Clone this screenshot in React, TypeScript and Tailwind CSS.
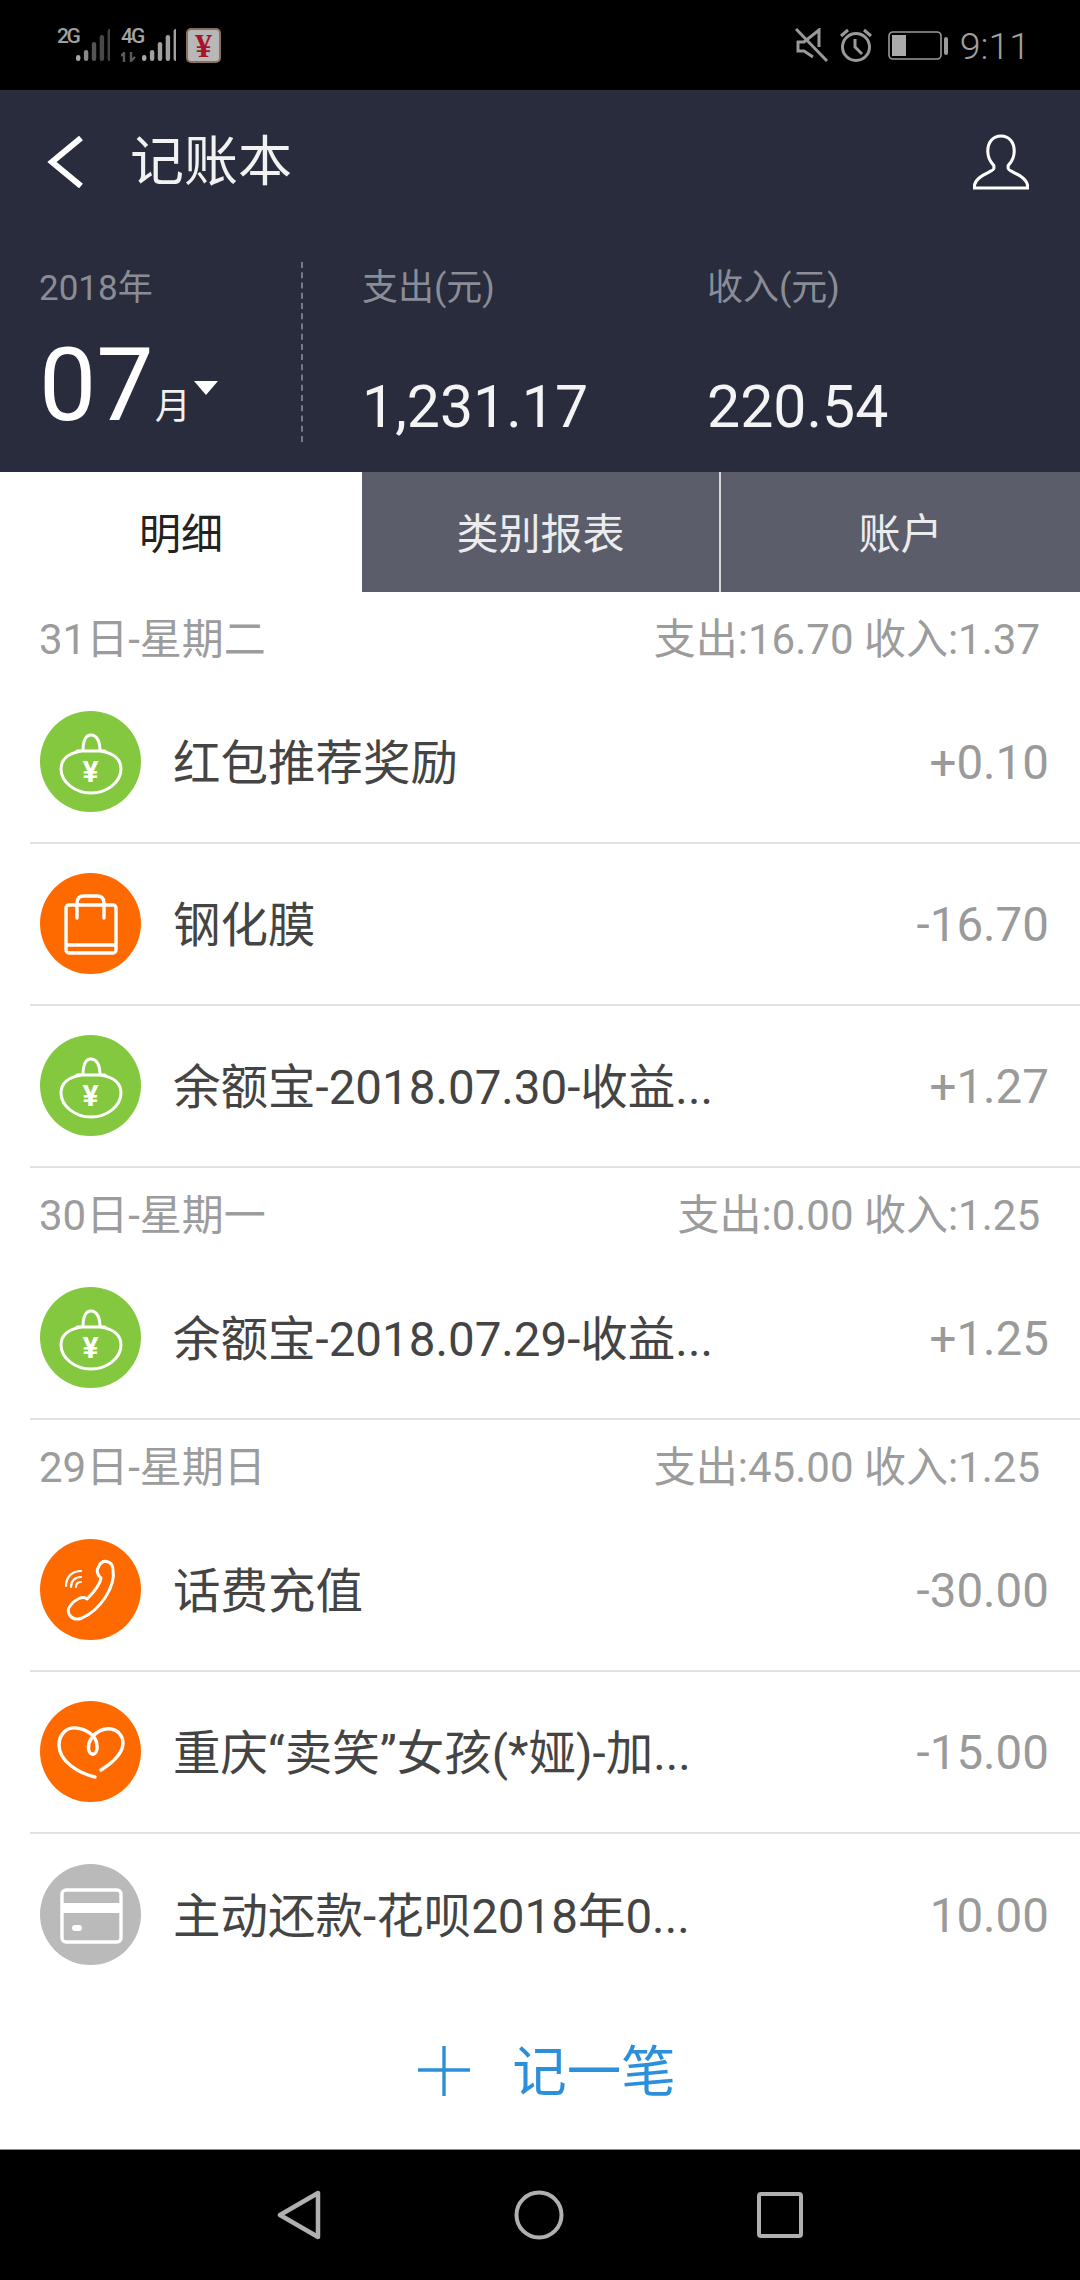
const FONT = 'font-["Roboto","Noto_Sans_CJK_SC",sans-serif]';

function MoneyBag() {
  return (
    <>
      <path d="M43 40C43 29 46 24 51 24C56 24 60 29 60 40" fill="none" stroke="#fff" strokeWidth="3" />
      <path d="M37 40H65" fill="none" stroke="#fff" strokeWidth="3" strokeLinecap="round" />
      <path d="M41 40C29 42 21 48 21 58C21 71 35 82 51 82C67 82 81 71 81 58C81 48 73 42 61 40" fill="none" stroke="#fff" strokeWidth="3" />
      <text x="50.5" y="70.5" textAnchor="middle" fontSize="30" fontWeight="700" fill="#fff" fontFamily="Roboto, sans-serif">¥</text>
    </>
  );
}

function Bag() {
  return (
    <>
      <rect x="26" y="32" width="50" height="48" rx="3" fill="none" stroke="#fff" strokeWidth="3.4" />
      <path d="M37 45V30C37 25 40 23 44 23H57C61 23 64 25 64 30V45" fill="none" stroke="#fff" strokeWidth="3.4" strokeLinecap="round" />
      <path d="M26 72H76" fill="none" stroke="#fff" strokeWidth="3.4" />
    </>
  );
}

function Phone() {
  return (
    <>
      <path d="M59 27C62 20 72 21 73 30C76 48 60 71 42 79C32 83 25 74 30 67C34 61 43 56 47 60C53 54 60 46 61 39C57 36 56 31 59 27Z" fill="none" stroke="#fff" strokeWidth="3" strokeLinejoin="round" />
      <path d="M36 48C36 45 38 43 41 43M31 48C31 42 35 38 41 38M26 47C26 38 32 32 41 32" fill="none" stroke="#fff" strokeWidth="2.2" strokeLinecap="round" />
    </>
  );
}

function Heart() {
  return (
    <path d="M55 76C38 72 19 60 19 44C19 32 28 26 36 27C46 28 56 34 57 44C58 50 55 54 52 53C48 52 47 44 51 38C56 30 64 27 71 28C78 29 83 35 83 42C83 52 72 62 61 69" fill="none" stroke="#fff" strokeWidth="3.4" strokeLinecap="round" />
  );
}

function Card() {
  return (
    <>
      <rect x="22" y="26" width="59" height="52" rx="4" fill="none" stroke="#fff" strokeWidth="3.4" />
      <rect x="22" y="39" width="59" height="10" fill="#fff" />
      <rect x="32" y="61" width="10" height="6" rx="3" fill="#fff" />
    </>
  );
}

const ICONS = {
  bag: { bg: "bg-[#84c83f]", el: <MoneyBag /> },
  shop: { bg: "bg-[#ff6a00]", el: <Bag /> },
  phone: { bg: "bg-[#ff6a00]", el: <Phone /> },
  heart: { bg: "bg-[#ff6a00]", el: <Heart /> },
  card: { bg: "bg-[#bababa]", el: <Card /> },
};

type IconName = keyof typeof ICONS;

function Row({ icon, title, amount, last }: { icon: IconName; title: string; amount: string; last?: boolean }) {
  const item = ICONS[icon];
  return (
    <div className="h-[162px] pl-[30px]">
      <div className={`flex h-full items-center pl-[10px] pr-[31px] ${last ? "" : "border-b-2 border-[#e2e2e2]"}`}>
        <div className={`mt-[-2px] h-[101px] w-[101px] shrink-0 rounded-full ${item.bg}`}>
          <svg viewBox="0 0 101 101" className="h-[101px] w-[101px]">{item.el}</svg>
        </div>
        <div className="ml-[32px] flex-1 whitespace-nowrap pt-[6px] text-[47.5px] leading-none text-[#444444]">{title}</div>
        <div className="pt-[4px] text-[47.5px] leading-none text-[#9a9a9a]">{amount}</div>
      </div>
    </div>
  );
}

function Section({ day, summary }: { day: string; summary: string }) {
  return (
    <div className="flex h-[90px] items-center justify-between pl-[39px] pr-[40px] pt-[6px] text-[42px] leading-none text-[#9c9c9c]">
      <span>{day}</span>
      <span>{summary}</span>
    </div>
  );
}

function Bars({ levels }: { levels: string[] }) {
  const hs = [6, 11, 19, 26, 32];
  return (
    <svg width="35" height="34" viewBox="0 0 35 34">
      {hs.map((h, i) => (
        <rect key={i} x={1 + i * 7.9} y={33 - h} width="4.4" height={h} rx="2.2" fill={levels[i]} />
      ))}
    </svg>
  );
}

export default function App() {
  return (
    <div className={`flex h-[2280px] w-[1080px] flex-col overflow-hidden bg-white ${FONT}`}>
      {/* status bar */}
      <div className="flex h-[90px] shrink-0 items-start justify-between bg-black pl-[57px] pr-[50px] pt-[28px] text-[#9a9a9a]">
        <div className="flex items-start">
          <span className="w-[18px] text-[21px] font-medium leading-[17px] tracking-[-2.5px] text-[#9f9f9f]">2G</span>
          <Bars levels={["#a8a8a8", "#8a8a8a", "#555555", "#484848", "#444444"]} />
          <div className="ml-[11px] flex w-[20px] flex-col">
            <span className="text-[21px] font-medium leading-[17px] tracking-[-2px] text-[#a5a5a5]">4G</span>
            <svg width="20" height="10" viewBox="0 0 20 10" fill="none" className="mt-[7px]">
              <path d="M3 10V1L0 4M10 0V9L14 5" stroke="#5a5a5a" strokeWidth="2.4" />
            </svg>
          </div>
          <Bars levels={["#a8a8a8", "#a0a0a0", "#a0a0a0", "#a0a0a0", "#a0a0a0"]} />
          <div className="ml-[10px] flex h-[35px] w-[35px] items-center justify-center rounded-[5px] border-2 border-[#8a6f5c] bg-[#b8b8b8] font-['Liberation_Serif',serif] text-[34px] font-bold leading-none text-[#a5142a]">¥</div>
        </div>
        <div className="flex items-start">
          <svg width="34" height="34" viewBox="0 0 34 34" fill="none" stroke="#9a9a9a">
            <path d="M2 14H9L24 2V19" strokeWidth="3" />
            <path d="M3 13V23H9L18 29" strokeWidth="3" />
            <path d="M1 1L32 33" strokeWidth="3" />
          </svg>
          <svg width="34" height="34" viewBox="0 0 34 34" fill="none" stroke="#9a9a9a" className="ml-[10px]">
            <circle cx="17" cy="19" r="13.5" strokeWidth="3" />
            <path d="M16 11V19L23 26" strokeWidth="3" />
            <path d="M2 8L9 2M32 8L25 2" strokeWidth="3" />
          </svg>
          <svg width="62" height="30" viewBox="0 0 62 30" fill="none" className="ml-[15px] mt-[3px]">
            <rect x="1" y="1" width="52" height="27" rx="4" stroke="#9a9a9a" strokeWidth="1.6" />
            <rect x="4" y="4" width="14" height="21" fill="#aaaaaa" />
            <rect x="56" y="6" width="4" height="18" rx="2" fill="#9a9a9a" />
          </svg>
          <span className="ml-[10px] mt-[-1px] text-[37.5px] font-light leading-[38px] text-[#a0a0a0]">9:11</span>
        </div>
      </div>

      {/* header */}
      <div className="h-[382px] shrink-0 bg-[#282c3d] text-white">
        <div className="flex h-[140px] items-center justify-between pl-[46px] pr-[50px] pt-[3px]">
          <div className="flex items-center">
            <svg width="38" height="52" viewBox="0 0 38 52" fill="none">
              <path d="M35 2L6 26L35 50" stroke="#fff" strokeWidth="6" />
            </svg>
            <span className="ml-[46px] pt-[2px] text-[54px] leading-none text-[#f2f2f2]">记账本</span>
          </div>
          <svg width="58" height="56" viewBox="0 0 56 55" fill="none">
            <path d="M28 2C20 2 15 8 15 17C15 24 18 28 21 31V34C21 37 4 40 2 50V53H54V50C52 40 35 37 35 34V31C38 28 41 24 41 17C41 8 36 2 28 2Z" stroke="#fff" strokeWidth="3" />
          </svg>
        </div>
        <div className="flex h-[242px] items-start">
          <div className="w-[301px] shrink-0 pl-[39px] pt-[37px]">
            <div className="text-[35px] leading-[44px] text-[#8a8d96]">2018年</div>
            <div className="mt-[30px] flex items-end">
              <span className="text-[102px] leading-[88px] text-white">07</span>
              <span className="ml-[1px] pb-[4px] text-[36px] leading-none text-[#f0f0f0]">月</span>
              <svg width="26" height="16" viewBox="0 0 26 16" className="mb-[33px] ml-[2px]"><path d="M1 1H25L13 15Z" fill="#fff" /></svg>
            </div>
          </div>
          <div className="mt-[32px] h-[180px] w-0 border-l-2 border-dashed border-[#77798a]" />
          <div className="ml-[59px] w-[345px] pt-[36px]">
            <div className="text-[36px] leading-[44px] text-[#8a8d96]">支出(元)</div>
            <div className="mt-[62px] text-[59px] leading-[70px] text-[#f4f4f4]">1,231.17</div>
          </div>
          <div className="pt-[36px]">
            <div className="text-[36px] leading-[44px] text-[#8a8d96]">收入(元)</div>
            <div className="mt-[62px] text-[59px] leading-[70px] text-[#f4f4f4]">220.54</div>
          </div>
        </div>
      </div>

      {/* tabs */}
      <div className="flex h-[120px] shrink-0 text-[42px] leading-none">
        <div className="flex w-[362px] items-center justify-center bg-white pt-[6px] text-[#222222]">明细</div>
        <div className="flex w-[357px] items-center justify-center bg-[#5b5e6a] pt-[6px] text-[#ececee]">类别报表</div>
        <div className="w-[2px] bg-[#d8d8dc]" />
        <div className="flex flex-1 items-center justify-center bg-[#5b5e6a] pt-[6px] text-[#ececee]">账户</div>
      </div>

      {/* list */}
      <div className="flex-1 overflow-hidden">
        <Section day="31日-星期二" summary="支出:16.70 收入:1.37" />
        <Row icon="bag" title="红包推荐奖励" amount="+0.10" />
        <Row icon="shop" title="钢化膜" amount="-16.70" />
        <Row icon="bag" title="余额宝-2018.07.30-收益..." amount="+1.27" />
        <Section day="30日-星期一" summary="支出:0.00 收入:1.25" />
        <Row icon="bag" title="余额宝-2018.07.29-收益..." amount="+1.25" />
        <Section day="29日-星期日" summary="支出:45.00 收入:1.25" />
        <Row icon="phone" title="话费充值" amount="-30.00" />
        <Row icon="heart" title="重庆“卖笑”女孩(*娅)-加..." amount="-15.00" />
        <Row icon="card" title="主动还款-花呗2018年0..." amount="10.00" last />
      </div>

      {/* add button */}
      <div className="flex h-[154px] shrink-0 items-center justify-center gap-[41px] border-b border-[#8c8c8c] bg-white pl-[13px] text-[#2b90d9]">
        <svg width="54" height="50" viewBox="0 0 54 50" fill="none" className="mt-[-4px]">
          <path d="M1 24H53M27 0V50" stroke="#2b90d9" strokeWidth="3.4" />
        </svg>
        <span className="text-[54.5px] leading-none">记一笔</span>
      </div>

      {/* nav bar */}
      <div className="relative flex h-[130px] shrink-0 items-start justify-center bg-black pt-[40px]">
        <div className="flex w-[526px] items-center justify-between">
          <svg width="44" height="50" viewBox="0 0 44 50" fill="none">
            <path d="M41 3V47L3 25Z" stroke="#b0b0b0" strokeWidth="4.5" strokeLinejoin="round" />
          </svg>
          <svg width="50" height="50" viewBox="0 0 50 50" fill="none">
            <circle cx="25" cy="25" r="22.5" stroke="#b0b0b0" strokeWidth="4" />
          </svg>
          <svg width="46" height="46" viewBox="0 0 46 46" fill="none">
            <rect x="2" y="2" width="42" height="42" rx="2" stroke="#b0b0b0" strokeWidth="4" />
          </svg>
        </div>
      </div>
    </div>
  );
}
